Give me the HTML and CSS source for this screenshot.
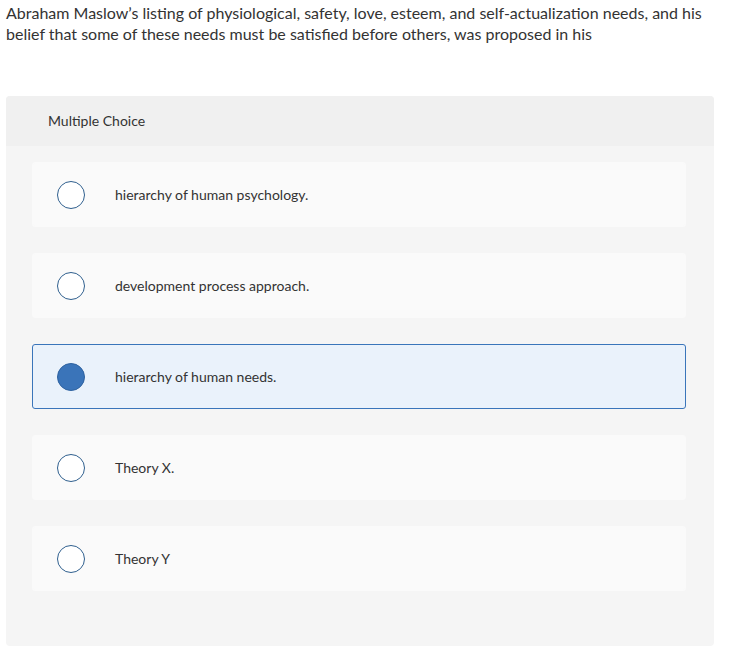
FILE: index.html
```html
<!DOCTYPE html>
<html>
<head>
<meta charset="utf-8">
<link rel="stylesheet" href="styles.css">
</head>
<body>
<div class="page">
  <p class="question">Abraham Maslow’s listing of physiological, safety, love, esteem, and self-actualization needs, and his belief that some of these needs must be satisfied before others, was proposed in his</p>
  <div class="panel">
    <div class="panel-head">Multiple Choice</div>
    <div class="options">
      <div class="option"><span class="radio"></span><span class="label">hierarchy of human psychology.</span></div>
      <div class="option"><span class="radio"></span><span class="label">development process approach.</span></div>
      <div class="option selected"><span class="radio"></span><span class="label">hierarchy of human needs.</span></div>
      <div class="option"><span class="radio"></span><span class="label">Theory X.</span></div>
      <div class="option"><span class="radio"></span><span class="label">Theory Y</span></div>
    </div>
  </div>
</div>
</body>
</html>
```

FILE: styles.css
```css
html, body {
  margin: 0;
  padding: 0;
  background: #ffffff;
}
body {
  font-family: Lato, "Liberation Sans", Arial, sans-serif;
  color: #333333;
}
.page {
  padding: 0 25px 0 6px;
}
.question {
  margin: 0;
  padding-top: 2px;
  font-size: 16px;
  line-height: 21px;
  color: #333333;
}
.panel {
  margin-top: 52px;
  background: #f5f5f5;
  border-radius: 4px;
  overflow: hidden;
  padding-bottom: 55px;
}
.panel-head {
  height: 50px;
  box-sizing: border-box;
  background: #f0f0f0;
  padding: 17px 0 0 42px;
  font-size: 14px;
  line-height: 16px;
  color: #333333;
}
.options {
  display: flex;
  flex-direction: column;
  gap: 26px;
  padding: 16px 28px 0 26px;
}
.option {
  height: 65px;
  box-sizing: border-box;
  background: #fafafa;
  border: 1px solid #fafafa;
  border-radius: 3px;
  display: flex;
  align-items: center;
  padding-left: 24px;
}
.option.selected {
  background: #eaf2fb;
  border-color: #3a75ba;
}
.radio {
  width: 28px;
  height: 28px;
  box-sizing: border-box;
  border: 1.5px solid #2f5f8e;
  border-radius: 50%;
  background: #ffffff;
  flex: none;
}
.selected .radio {
  background: #3a74b9;
  border-color: #2e62a0;
}
.label {
  margin-left: 30px;
  font-size: 14px;
  color: #333333;
}
```
